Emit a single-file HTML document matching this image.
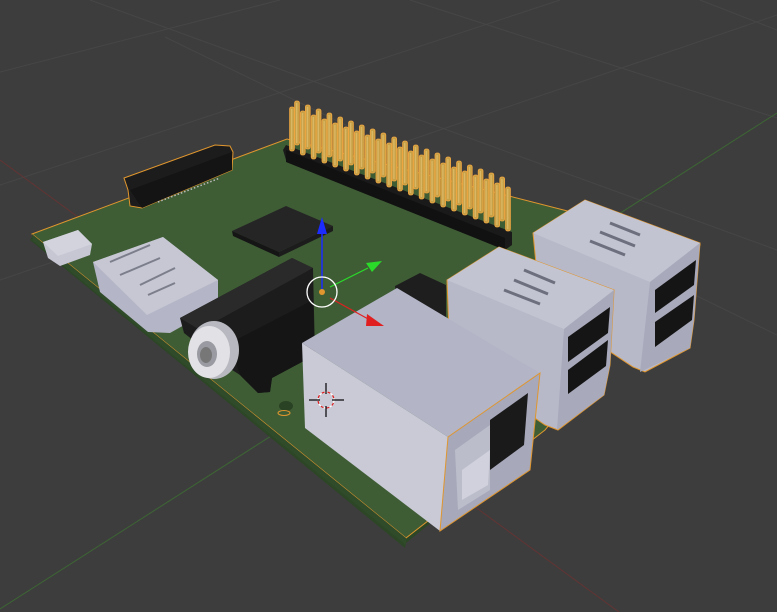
<!DOCTYPE html>
<html><head><meta charset="utf-8"><style>
html,body{margin:0;padding:0;background:#3d3d3d;overflow:hidden}
svg{display:block}
</style></head><body>
<svg width="777" height="612" viewBox="0 0 777 612" xmlns="http://www.w3.org/2000/svg">
<defs>
<g id="pin"><rect x="-2.4" y="0" width="4.8" height="44" rx="2" fill="#c8a046" stroke="#f0a640" stroke-width="0.8"/><rect x="-1" y="2" width="1.4" height="40" fill="#e0c070" opacity="0.7"/></g>
</defs>
<rect width="777" height="612" fill="#3d3d3d"/>
<g stroke="#464646" stroke-width="1" fill="none">
<line x1="0" y1="72" x2="280" y2="0"/>
<line x1="0" y1="185" x2="560" y2="0"/>
<line x1="90" y1="0" x2="777" y2="250"/>
<line x1="410" y1="0" x2="777" y2="118"/>
<line x1="0" y1="280" x2="777" y2="15"/>
<line x1="165" y1="37" x2="777" y2="335"/>
<line x1="700" y1="0" x2="777" y2="30"/>
</g>
<line x1="0" y1="160" x2="619" y2="612" stroke="#633434" stroke-width="1"/>
<line x1="0" y1="609" x2="777" y2="113" stroke="#3d6634" stroke-width="1"/>
<polygon points="33,235 287,139 560,252 545,430 406,543 405,548 30,240" fill="#2c4626"/>
<polygon points="32,234 287,139 700,245 545,430 406,538" fill="#3f5d35" stroke="#e0962e" stroke-width="1"/>
<polygon points="32,234 406,538 406,545 33,241" fill="#2f4b29"/>
<ellipse cx="286" cy="406" rx="7" ry="5" fill="#2a4224"/>
<ellipse cx="284" cy="413" rx="6" ry="2.5" fill="none" stroke="#e0962e" stroke-width="1"/>
<polygon points="124,178 215,145 230,146 233,152 232,170 142,208 130,206 128,190" fill="#1c1c1c" stroke="#e0962e" stroke-width="1"/>
<polygon points="130,190 232,152 232,170 142,208" fill="#141414"/>
<line x1="158" y1="202" x2="220" y2="178" stroke="#bbb" stroke-width="1.5" stroke-dasharray="1.5 2"/>
<polygon points="286,145 512,232 512,245 505,250 286,160 283,150" fill="#1a1a1a"/>
<polygon points="286,150 505,238 505,250 286,162" fill="#111"/>
<g transform="translate(5,-6)">
<use href="#pin" x="292" y="107"/><use href="#pin" x="302.8" y="111"/><use href="#pin" x="313.6" y="115"/><use href="#pin" x="324.4" y="119"/><use href="#pin" x="335.2" y="123"/><use href="#pin" x="346" y="127"/><use href="#pin" x="356.8" y="131"/><use href="#pin" x="367.6" y="135"/><use href="#pin" x="378.4" y="139"/><use href="#pin" x="389.2" y="143"/><use href="#pin" x="400" y="147"/><use href="#pin" x="410.8" y="151"/><use href="#pin" x="421.6" y="155"/><use href="#pin" x="432.4" y="159"/><use href="#pin" x="443.2" y="163"/><use href="#pin" x="454" y="167"/><use href="#pin" x="464.8" y="171"/><use href="#pin" x="475.6" y="175"/><use href="#pin" x="486.4" y="179"/><use href="#pin" x="497.2" y="183"/>
</g>
<g>
<use href="#pin" x="292" y="107"/><use href="#pin" x="302.8" y="111"/><use href="#pin" x="313.6" y="115"/><use href="#pin" x="324.4" y="119"/><use href="#pin" x="335.2" y="123"/><use href="#pin" x="346" y="127"/><use href="#pin" x="356.8" y="131"/><use href="#pin" x="367.6" y="135"/><use href="#pin" x="378.4" y="139"/><use href="#pin" x="389.2" y="143"/><use href="#pin" x="400" y="147"/><use href="#pin" x="410.8" y="151"/><use href="#pin" x="421.6" y="155"/><use href="#pin" x="432.4" y="159"/><use href="#pin" x="443.2" y="163"/><use href="#pin" x="454" y="167"/><use href="#pin" x="464.8" y="171"/><use href="#pin" x="475.6" y="175"/><use href="#pin" x="486.4" y="179"/><use href="#pin" x="497.2" y="183"/><use href="#pin" x="508" y="187"/>
</g>
<polygon points="232,231 286,206 333,226 279,252" fill="#252525"/>
<polygon points="232,231 279,252 279,257 233,236" fill="#151515"/>
<polygon points="279,252 333,226 333,231 279,257" fill="#1c1c1c"/>
<polygon points="43,242 78,230 92,244 90,255 60,266 48,258" fill="#c6c7d3"/>
<polygon points="43,242 78,230 92,244 58,256" fill="#d2d3dd"/>
<polygon points="93,262 163,237 218,280 218,306 170,333 148,332 100,292" fill="#b4b5c6"/>
<polygon points="93,262 163,237 218,280 147,315" fill="#c6c7d3"/>
<g stroke="#7d7e8c" stroke-width="2"><line x1="110" y1="262" x2="150" y2="245"/><line x1="120" y1="275" x2="160" y2="258"/><line x1="140" y1="285" x2="175" y2="268"/><line x1="148" y1="295" x2="175" y2="283"/></g>
<polygon points="395,286 420,273 446,285 446,320 400,330" fill="#1e1e1e"/>
<polygon points="180,318 292,258 313,268 315,355 272,378 270,392 258,393 240,375 226,366 184,333" fill="#1c1c1c"/>
<polygon points="180,318 292,258 313,268 200,330" fill="#2a2a2a"/>
<polygon points="230,343 313,300 315,355 272,378 270,392 258,393 240,375" fill="#151515"/>
<ellipse cx="214" cy="350" rx="25" ry="29" fill="#b8b9c0"/>
<ellipse cx="209" cy="352" rx="21" ry="26" fill="#e2e2e6"/>
<ellipse cx="207" cy="354" rx="10" ry="13" fill="#9a9ba2"/>
<ellipse cx="206" cy="355" rx="6" ry="8" fill="#777"/>
<polygon points="533,233 585,200 700,243 694,320 690,348 645,372 633,367 540,305" fill="#b8b9c8" stroke="#e0962e" stroke-width="1"/>
<polygon points="533,233 585,200 700,243 650,282" fill="#c3c4d2"/>
<polygon points="650,282 700,243 694,320 690,348 640,372" fill="#a8a9bb"/>
<polygon points="655,290 696,260 694,285 655,313" fill="#151515"/>
<polygon points="655,322 694,295 692,320 655,347" fill="#151515"/>
<g stroke="#6e6f7e" stroke-width="3"><line x1="610" y1="223" x2="640" y2="235"/><line x1="600" y1="232" x2="635" y2="246"/><line x1="590" y1="241" x2="625" y2="255"/></g>
<polygon points="447,280 499,247 614,290 610,365 604,395 558,430 545,425 450,360" fill="#b8b9c8" stroke="#e0962e" stroke-width="1"/>
<polygon points="447,280 499,247 614,290 564,329" fill="#c3c4d2"/>
<polygon points="564,329 614,290 610,365 604,395 557,430" fill="#a8a9bb"/>
<polygon points="568,337 610,307 608,333 568,362" fill="#151515"/>
<polygon points="568,370 608,340 606,366 568,394" fill="#151515"/>
<g stroke="#6e6f7e" stroke-width="3"><line x1="524" y1="270" x2="555" y2="283"/><line x1="514" y1="280" x2="548" y2="294"/><line x1="504" y1="290" x2="540" y2="304"/></g>
<polygon points="302,343 397,288 540,373 448,437" fill="#b3b4c6"/>
<polygon points="302,343 448,437 440,531 305,428" fill="#c9cad6"/>
<polygon points="448,437 540,373 530,470 440,531" fill="#a7a8ba" stroke="#e0962e" stroke-width="1"/>
<polygon points="490,420 528,393 524,445 490,470" fill="#1a1a1a"/>
<polygon points="455,450 490,425 490,490 458,510" fill="#bcbdcb"/>
<polygon points="462,470 490,450 488,485 462,500" fill="#d0d1dc"/>
<line x1="322" y1="292" x2="322" y2="232" stroke="#1c2cff" stroke-width="1.5"/>
<polygon points="322,217 317,234 327,234" fill="#1c2cff"/>
<line x1="330" y1="287" x2="368" y2="268" stroke="#2adb2a" stroke-width="1.2"/>
<polygon points="382,261 366,263 372,272" fill="#2adb2a"/>
<line x1="330" y1="298" x2="370" y2="320" stroke="#e02020" stroke-width="1.2"/>
<polygon points="384,326 367,314 366,326" fill="#e02020"/>
<circle cx="322" cy="292" r="15" fill="none" stroke="#fff" stroke-width="1.3"/>
<circle cx="322" cy="292" r="3" fill="#e0962e"/>
<circle cx="326" cy="400" r="8" fill="none" stroke="#fff" stroke-width="1.2" stroke-dasharray="3 3"/>
<circle cx="326" cy="400" r="8" fill="none" stroke="#e02020" stroke-width="1.2" stroke-dasharray="3 3" stroke-dashoffset="3"/>
<g stroke="#000" stroke-width="1.2"><line x1="326" y1="383" x2="326" y2="394"/><line x1="326" y1="406" x2="326" y2="417"/><line x1="309" y1="400" x2="320" y2="400"/><line x1="332" y1="400" x2="344" y2="400"/></g>
</svg>
</body></html>
